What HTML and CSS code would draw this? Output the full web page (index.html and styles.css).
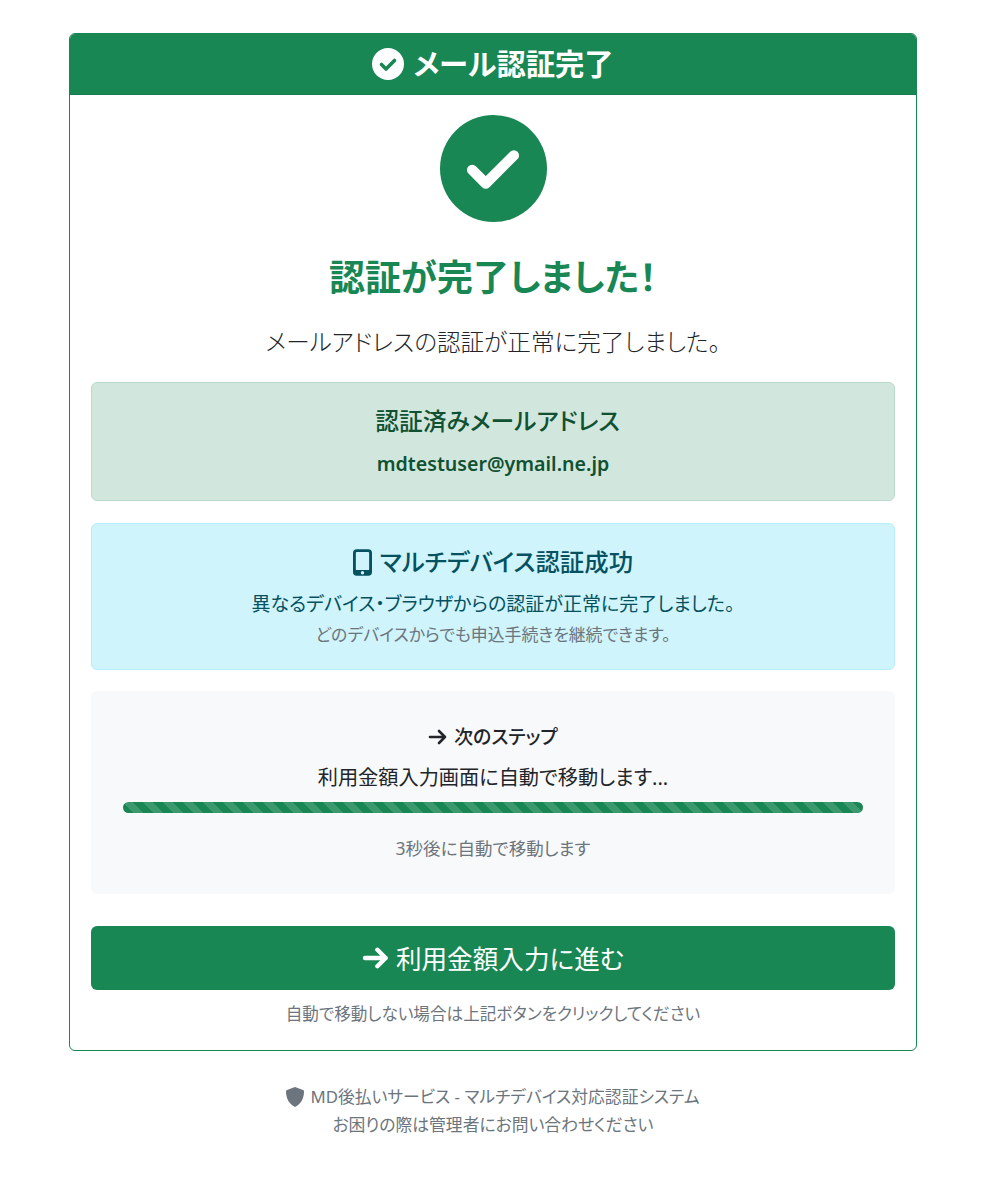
FILE: index.html
```html
<!DOCTYPE html>
<html lang="ja">
<head>
  <meta charset="UTF-8">
  <title>メール認証完了</title>
  <link rel="stylesheet" href="styles.css">
</head>
<body>

  <div class="container">
    <div class="card">
      <div class="card_header">
        <svg class="header_icon" viewBox="0 0 32 32"><circle cx="16" cy="16" r="16" fill="#fff"/><path d="M9.500 16.500l4.500 4.500 8.500-8.500" fill="none" stroke="#198754" stroke-width="3.600" stroke-linecap="round" stroke-linejoin="round"/></svg>
        <h1>メール認証完了</h1>
      </div>

      <div class="card_body">
        <div class="big_check">
          <svg viewBox="0 0 64 64"><path d="M9 33l15 15L55 17" fill="none" stroke="#fff" stroke-width="11.500" stroke-linecap="round" stroke-linejoin="round"/></svg>
        </div>
        <h2 class="title">認証が完了しました！</h2>
        <p class="lead">メールアドレスの認証が正常に完了しました。</p>

        <div class="alert alert_success">
          <h3>認証済みメールアドレス</h3>
          <p class="email">mdtestuser@ymail.ne.jp</p>
        </div>

        <div class="alert alert_info">
          <h3 class="with_icon">
            <svg class="phone_icon" viewBox="0 0 20 28"><path fill="currentColor" fill-rule="evenodd" d="M4 0h12a4 4 0 0 1 4 4v20a4 4 0 0 1-4 4H4a4 4 0 0 1-4-4V4a4 4 0 0 1 4-4zm-1 4v17a1 1 0 0 0 1 1h12a1 1 0 0 0 1-1V4a1 1 0 0 0-1-1H4a1 1 0 0 0-1 1zm7 19a1.800 1.800 0 1 0 0 3.600 1.800 1.800 0 0 0 0-3.600z"/></svg>
            マルチデバイス認証成功
          </h3>
          <p class="info_main">異なるデバイス・ブラウザからの認証が正常に完了しました。</p>
          <p class="info_sub">どのデバイスからでも申込手続きを継続できます。</p>
        </div>

        <div class="next_step">
          <h4 class="with_icon">
            <svg class="arrow_icon" viewBox="0 0 20 16"><path d="M2 8h15M11 2l6 6-6 6" fill="none" stroke="currentColor" stroke-width="2.600" stroke-linecap="round" stroke-linejoin="round"/></svg>
            次のステップ
          </h4>
          <p class="step_text">利用金額入力画面に自動で移動します...</p>
          <div class="progress"></div>
          <p class="step_count">3秒後に自動で移動します</p>
        </div>

        <a class="btn" href="#">
          <svg class="btn_arrow" viewBox="0 0 20 16"><path d="M2 8h15M11 2l6 6-6 6" fill="none" stroke="currentColor" stroke-width="3.200" stroke-linecap="round" stroke-linejoin="round"/></svg>
          利用金額入力に進む
        </a>
        <p class="btn_note">自動で移動しない場合は上記ボタンをクリックしてください</p>
      </div>
    </div>

    <div class="footer">
      <p class="with_icon">
        <svg class="shield_icon" viewBox="0 0 18 20"><path fill="currentColor" d="M9 0l8 3c.6.200 1 .8 1 1.400C18 11 15 17 9 20 3 17 0 11 0 4.400 0 3.800.4 3.200 1 3z"/></svg>
        MD後払いサービス - マルチデバイス対応認証システム
      </p>
      <p>お困りの際は管理者にお問い合わせください</p>
    </div>
  </div>

</body>
</html>
```

FILE: styles.css
```css
:root {
  --verde: #198754;
  --cinza: #6c757d;
  --texto: #212529;
}

* {
  box-sizing: border-box;
}

body {
  margin: 0;
  background: #fff;
  color: var(--texto);
  font-family: "Noto Sans", "Noto Sans CJK JP", sans-serif;
  font-size: 16px;
  font-feature-settings: "palt";
}

h1, h2, h3, h4, p {
  margin: 0;
}

.container {
  padding: 33px 70px 0 69px;
}

.card {
  border: 1px solid var(--verde);
  border-radius: 6px;
  overflow: hidden;
}

.card_header {
  display: flex;
  align-items: center;
  justify-content: center;
  gap: 9px;
  height: 61px;
  background: var(--verde);
  border-bottom: 1px solid #167a4c;
  color: #fff;
}

.card_header h1 {
  padding-top: 2px;
  font-size: 29.300px;
  font-weight: 700;
  line-height: 1.2;
}

.header_icon {
  width: 32px;
  height: 32px;
}

.card_body {
  padding: 20px 21px 20px;
  text-align: center;
}

.big_check {
  display: flex;
  align-items: center;
  justify-content: center;
  width: 107px;
  height: 107px;
  margin: 0 auto;
  border-radius: 50%;
  background: var(--verde);
}

.big_check svg {
  width: 58px;
  height: 58px;
}

.title {
  margin-top: 33px;
  color: var(--verde);
  font-size: 36px;
  font-weight: 700;
  line-height: 46px;
}

.lead {
  margin-top: 23px;
  font-size: 23.600px;
  font-weight: 300;
  line-height: 36px;
}

.alert {
  border: 1px solid;
  border-radius: 6px;
  padding: 16px;
}

.alert_success {
  height: 119px;
  margin-top: 22px;
  background: #d1e7dd;
  border-color: #badbcc;
  color: #0f5132;
}

.alert_success h3 {
  padding-left: 9px;
}

.alert_info {
  height: 147px;
  margin-top: 22px;
  background: #cff4fc;
  border-color: #b6effb;
  color: #055160;
}

.alert h3 {
  font-size: 23.800px;
  font-weight: 500;
  line-height: 44px;
}

.alert_info h3 {
  font-size: 24.400px;
}

.email {
  margin-top: 1px;
  font-size: 19.600px;
  font-weight: 600;
  line-height: 40px;
}

.with_icon {
  display: flex;
  align-items: center;
  justify-content: center;
}

.phone_icon {
  width: 19px;
  height: 27px;
  margin-right: 8px;
}

.info_main {
  margin: 5px 0 2px;
  font-size: 19px;
  line-height: 30px;
}

.info_sub {
  color: var(--cinza);
  font-size: 16.900px;
  line-height: 28px;
}

.next_step {
  height: 203px;
  margin-top: 21px;
  padding: 26px 32px 0;
  background: #f8f9fa;
  border-radius: 6px;
}

.next_step h4 {
  font-size: 18.900px;
  font-weight: 500;
  line-height: 40px;
}

.arrow_icon {
  width: 20px;
  height: 16px;
  margin-right: 6px;
}

.step_text {
  margin: -1px 0 4px;
  font-size: 20.200px;
  line-height: 42px;
}

.progress {
  height: 11px;
  border-radius: 6px;
  background-color: var(--verde);
  background-image: linear-gradient(45deg, rgba(255,255,255,.15) 25%, transparent 25%, transparent 50%, rgba(255,255,255,.15) 50%, rgba(255,255,255,.15) 75%, transparent 75%);
  background-size: 20px 20px;
}

.step_count {
  margin-top: 18px;
  color: var(--cinza);
  font-size: 17.500px;
  line-height: 34px;
}

.btn {
  display: flex;
  align-items: center;
  justify-content: center;
  height: 64px;
  margin-top: 32px;
  background: var(--verde);
  border-radius: 6px;
  color: #fff;
  font-size: 25.600px;
  text-decoration: none;
}

.btn_arrow {
  width: 28px;
  height: 22px;
  margin-right: 6px;
}

.btn_note {
  margin-top: 8px;
  color: var(--cinza);
  font-size: 16.600px;
  line-height: 32px;
}

.footer {
  margin-top: 32px;
  color: var(--cinza);
  font-size: 16.800px;
  line-height: 28px;
  text-align: center;
}

.shield_icon {
  width: 18px;
  height: 20px;
  margin-right: 6px;
}
```
